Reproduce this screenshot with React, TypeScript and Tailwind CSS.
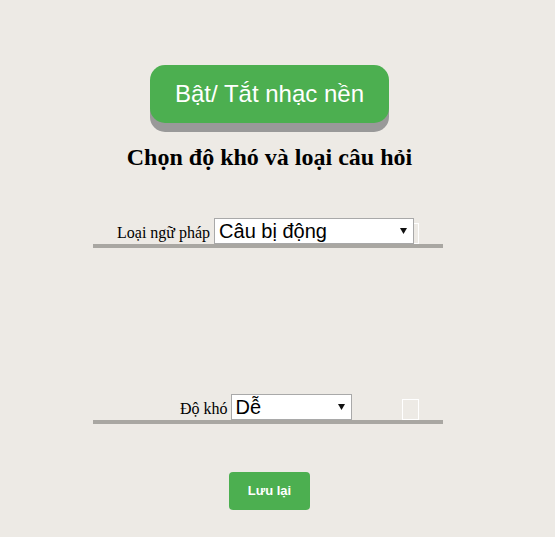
import React from 'react';

function FakeSelect({ value, width }: { value: string; width: string }) {
  return (
    <div className={`relative z-10 flex h-[26px] ${width} items-center justify-between border border-[#a9a9a9] bg-white pl-[4px] pr-[6px]`}>
      <span className="font-['Liberation_Sans',Arial,sans-serif] text-[20px] leading-[24px] text-black">{value}</span>
      <svg width="7" height="6" viewBox="0 0 7 6" className="mb-[1px]">
        <path d="M0 0h7L3.5 6z" fill="#111" />
      </svg>
    </div>
  );
}

function EmptyBox() {
  return <div className="absolute bottom-0 left-[309px] h-[21px] w-[17px] border border-white" />;
}

export default function App() {
  return (
    <div className="min-h-[537px] w-full bg-[#edeae5]">
      <div className="flex w-[539px] flex-col items-center pt-[65px]">
        <button className="h-[58px] w-[239px] rounded-[15px] bg-[#4caf50] font-['Liberation_Sans',Arial,sans-serif] text-[24px] text-white shadow-[0_9px_0_#999]">
          Bật/ Tắt nhạc nền
        </button>

        <h2 className="mt-[20px] font-['Liberation_Serif','Times_New_Roman',serif] text-[24px] font-bold leading-[28px] text-black">
          Chọn độ khó và loại câu hỏi
        </h2>

        <div className="relative mt-[47px] ml-[93px] w-[350px] self-start border-b-4 border-[#a9a7a2]">
          <div className="flex h-[26px] items-baseline pl-[24px]">
            <span className="mr-[4px] font-['Liberation_Serif','Times_New_Roman',serif] text-[16px] leading-[20px] text-black">Loại ngữ pháp</span>
            <FakeSelect value="Câu bị động" width="w-[200px]" />
          </div>
          <EmptyBox />
        </div>

        <div className="relative mt-[146px] ml-[93px] w-[350px] self-start border-b-4 border-[#a9a7a2]">
          <div className="flex h-[26px] items-baseline pl-[87px]">
            <span className="mr-[3px] font-['Liberation_Serif','Times_New_Roman',serif] text-[16px] leading-[20px] text-black">Độ khó</span>
            <FakeSelect value="Dễ" width="w-[121px]" />
          </div>
          <EmptyBox />
        </div>

        <button className="mt-[48px] h-[38px] w-[81px] rounded-[4px] bg-[#4caf50] font-['Liberation_Sans',Arial,sans-serif] text-[13px] font-bold text-white">
          Lưu lại
        </button>
      </div>
    </div>
  );
}
